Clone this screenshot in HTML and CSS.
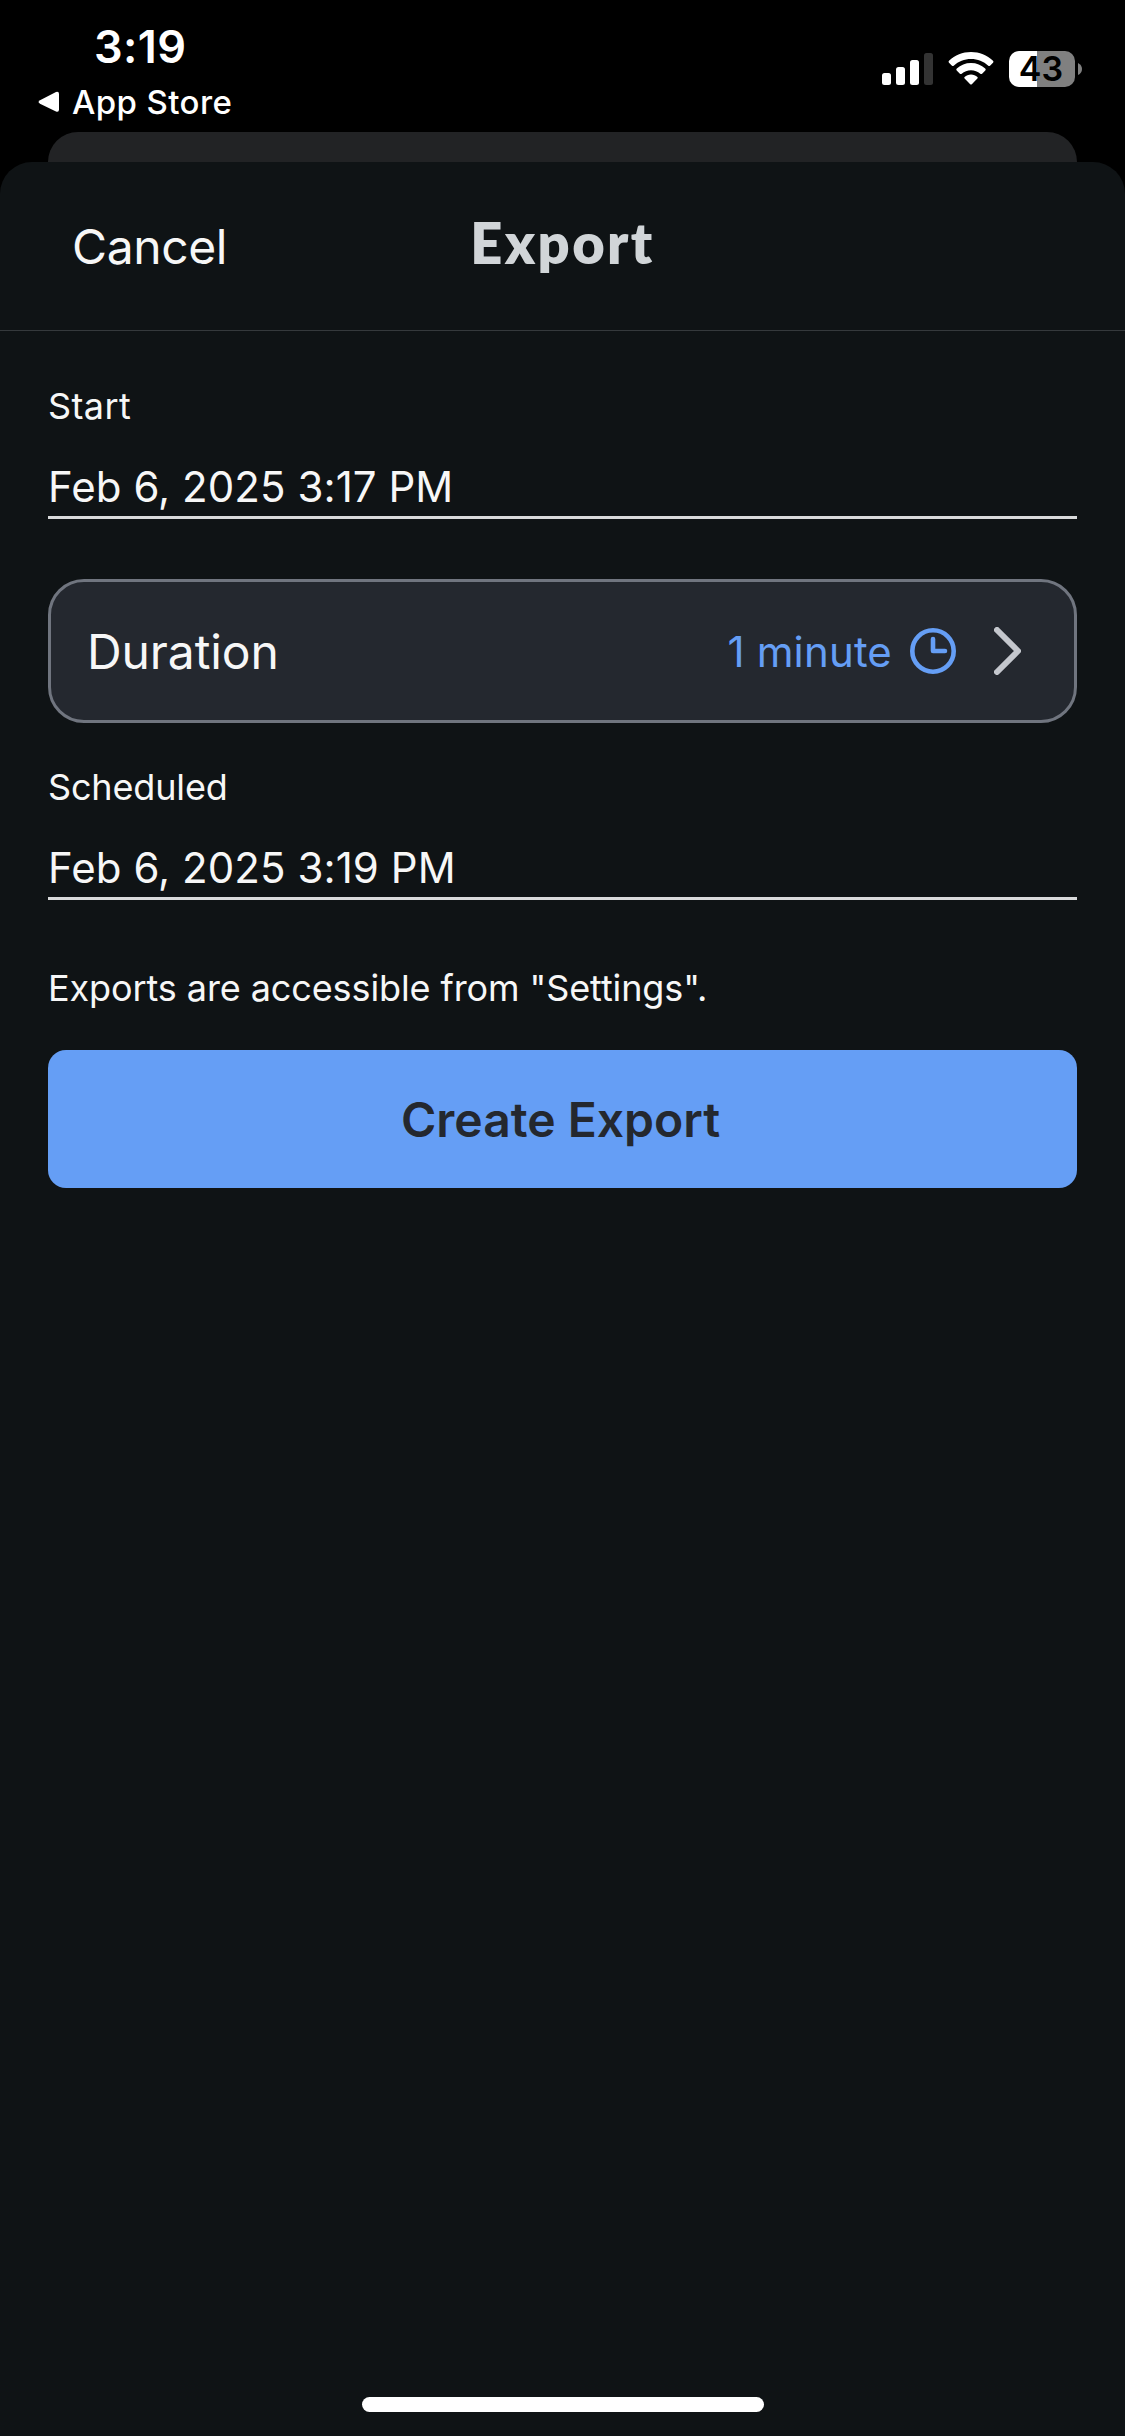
FILE: index.html
```html
<!DOCTYPE html>
<html lang="en">
<head>
    <meta charset="UTF-8">
    <meta name="viewport" content="width=device-width, initial-scale=1.0">
    <title>Export</title>
    <link rel="stylesheet" href="styles.css">
</head>
<body>
    <div class="status-bar">
        <div class="status-left">
            <div class="time">3:19</div>
            <div class="back-link">
                <svg class="back-arrow" viewBox="0 0 21 22">
                    <path d="M2 9.2 L18 1 Q21 0 21 3 V18.500 Q21 21.500 18 20.500 L2 12.700 Q-1 11 2 9.200Z" fill="#fff"/>
                </svg>
                <span>App Store</span>
            </div>
        </div>
        <div class="status-right">
            <svg class="signal" viewBox="0 0 51 32" fill="#fff">
                <rect x="0" y="20" width="9" height="12" rx="2.500"/>
                <rect x="14" y="14" width="9" height="18" rx="2.500"/>
                <rect x="28" y="7" width="9" height="25" rx="2.500"/>
                <rect x="42" y="0" width="9" height="32" rx="2.500" fill="#333"/>
            </svg>
            <svg class="wifi" viewBox="0 0 46 33" fill="#fff">
                <path d="M23 0 C31.500 0 39 3.200 45 8.800 Q46 9.800 45 10.800 L42 13.700 Q41.200 14.500 40.300 13.700 C35.600 9.400 29.600 7 23 7 C16.400 7 10.400 9.400 5.700 13.700 Q4.800 14.500 4 13.700 L1 10.800 Q0 9.800 1 8.800 C7 3.200 14.500 0 23 0Z"/>
                <path d="M23 11 C28.500 11 33.400 13 37.200 16.500 Q38.300 17.500 37.300 18.500 L34.100 21.700 Q33.200 22.500 32.300 21.700 C29.700 19.500 26.500 18.200 23 18.200 C19.500 18.200 16.300 19.500 13.700 21.700 Q12.800 22.500 11.900 21.700 L8.700 18.500 Q7.700 17.500 8.800 16.500 C12.600 13 17.500 11 23 11Z"/>
                <path d="M23 22.500 C25.500 22.500 27.700 23.400 29.400 24.900 Q30.200 25.700 29.400 26.500 L23.800 32.200 Q23 33 22.200 32.200 L16.600 26.500 Q15.800 25.700 16.600 24.900 C18.300 23.400 20.500 22.500 23 22.500Z"/>
            </svg>
            <div class="battery">
                <div class="battery-body">43</div>
                <svg class="battery-cap" viewBox="0 0 4 12"><path d="M0 0 Q4 2 4 6 Q4 10 0 12Z" fill="#808080"/></svg>
            </div>
        </div>
    </div>

    <div class="sheet-behind"></div>

    <div class="sheet">
        <div class="sheet-header">
            <div class="cancel">Cancel</div>
            <div class="title">Export</div>
        </div>

        <div class="form">
            <div class="field">
                <div class="field-label label-start">Start</div>
                <div class="field-value">Feb 6, 2025 3:17 PM</div>
            </div>

            <div class="duration">
                <span class="duration-label">Duration</span>
                <span class="duration-value">1 minute</span>
                <svg class="clock" viewBox="0 0 46 46" fill="none" stroke="currentColor">
                    <circle cx="23" cy="23" r="20.700" stroke-width="4.600"/>
                    <path d="M23 11V23H35" stroke-width="4.600" stroke-linecap="round" stroke-linejoin="round"/>
                </svg>
                <svg class="chevron" viewBox="0 0 27 48" fill="none" stroke="currentColor">
                    <path d="M3 3L24 24L3 45" stroke-width="6" stroke-linecap="round" stroke-linejoin="round"/>
                </svg>
            </div>

            <div class="field">
                <div class="field-label label-scheduled">Scheduled</div>
                <div class="field-value">Feb 6, 2025 3:19 PM</div>
            </div>

            <div class="hint">Exports are accessible from "Settings".</div>
            <div class="create-button">Create Export</div>
        </div>

        <div class="home-indicator"></div>
    </div>
</body>
</html>
```

FILE: styles.css
```css
* {
    margin: 0;
    padding: 0;
    box-sizing: border-box;
}

body {
    width: 1125px;
    height: 2436px;
    display: flex;
    flex-direction: column;
    overflow: hidden;
    background-color: #000;
    color: #f7f7f7;
    font-family: Inter, sans-serif;
    white-space: nowrap;
}

svg {
    display: block;
    flex: none;
}

/* Status bar */
.status-bar {
    height: 132px;
    display: flex;
    justify-content: space-between;
    padding: 20px 43px 0 38px;
    color: #fff;
}

.time {
    padding-left: 56px;
    font-size: 45px;
    line-height: 54px;
    font-weight: 600;
    letter-spacing: 0.4px;
}

.back-link {
    display: flex;
    align-items: center;
    gap: 13px;
    margin-top: 8px;
    font-size: 33px;
    line-height: 40px;
    font-weight: 500;
    letter-spacing: 0.4px;
}

.back-arrow {
    width: 21px;
    height: 22px;
}

.status-right {
    display: flex;
    align-items: flex-start;
    padding-top: 31px;
}

.signal {
    width: 51px;
    height: 32px;
    margin: 2px 15px 0 0;
}

.wifi {
    width: 46px;
    height: 33px;
    margin: 1px 15px 0 0;
}

.battery {
    display: flex;
    align-items: center;
    gap: 3px;
}

.battery-body {
    width: 66px;
    height: 36px;
    padding-right: 2px;
    border-radius: 10px;
    background: linear-gradient(to right, #fff 28px, #808080 28px);
    color: #000;
    font-size: 34px;
    line-height: 36px;
    font-weight: 600;
    text-align: center;
}

.battery-cap {
    width: 4px;
    height: 12px;
}

/* Sheets */
.sheet-behind {
    height: 30px;
    margin: 0 48px;
    border-radius: 30px 30px 0 0;
    background-color: #222325;
}

.sheet {
    flex: 1;
    display: flex;
    flex-direction: column;
    border-radius: 32px 32px 0 0;
    background-color: #0f1315;
}

.sheet-header {
    height: 169px;
    display: grid;
    grid-template-columns: 1fr auto 1fr;
    align-items: center;
    padding: 0 72px;
    border-bottom: 1px solid #35393c;
}

.cancel {
    padding-top: 2px;
    font-size: 48px;
    line-height: 58px;
    letter-spacing: -0.4px;
}

.title {
    padding-bottom: 6px;
    font-family: Lato, sans-serif;
    font-size: 56px;
    line-height: 66px;
    font-weight: 800;
    letter-spacing: 2.4px;
    color: #d1d5d8;
}

/* Form */
.form {
    flex: 1;
    padding: 53px 48px 0;
}

.field-label {
    margin-bottom: 33px;
    font-size: 36px;
    line-height: 44px;
}

.label-start {
    letter-spacing: 0.4px;
}

.label-scheduled {
    letter-spacing: -0.15px;
}

.field-value {
    padding-bottom: 4px;
    border-bottom: 3px solid #d9dadb;
    font-size: 42px;
    line-height: 51px;
    letter-spacing: 0.06px;
}

.duration {
    height: 144px;
    display: flex;
    align-items: center;
    margin: 60px 0 42px;
    padding: 0 53px 0 36px;
    border: 3px solid #70757f;
    border-radius: 36px;
    background-color: #24282f;
}

.duration-label {
    flex: 1;
    font-size: 48px;
    letter-spacing: -0.1px;
}

.duration-value {
    margin-right: 18px;
    font-size: 42px;
    letter-spacing: 0.15px;
    color: #659ef5;
}

.clock {
    width: 46px;
    height: 46px;
    margin-right: 38px;
    color: #659ef5;
}

.chevron {
    width: 27px;
    height: 48px;
    color: #c4c7cd;
}

.hint {
    margin: 66px 0 40px;
    font-size: 36px;
    line-height: 44px;
    letter-spacing: -0.1px;
}

.create-button {
    height: 138px;
    padding-right: 4px;
    border-radius: 18px;
    background-color: #659ef5;
    color: #24282f;
    font-size: 48px;
    line-height: 140px;
    font-weight: 600;
    text-align: center;
}

.home-indicator {
    width: 402px;
    height: 15px;
    margin: 0 auto 24px;
    border-radius: 8px;
    background-color: #fff;
}
```
